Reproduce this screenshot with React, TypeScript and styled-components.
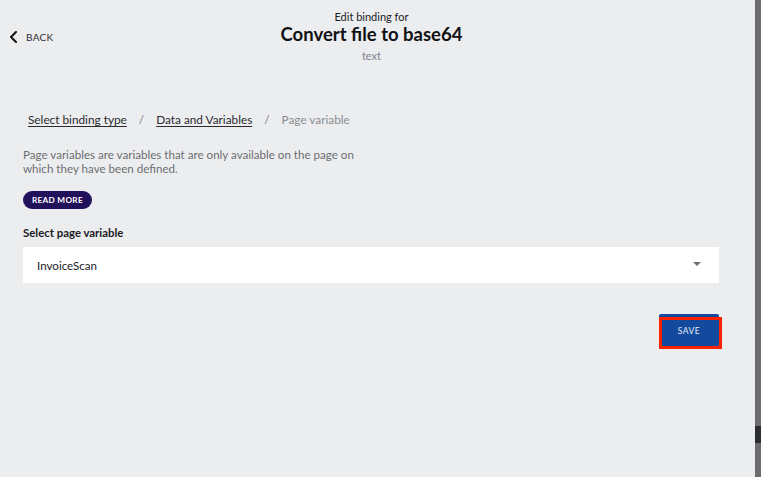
import React from "react";
import styled, { createGlobalStyle } from "styled-components";

const GlobalStyle = createGlobalStyle`
  html, body { margin: 0; padding: 0; background: #ecedef; }
  body { font-family: Lato, "Open Sans", sans-serif; color: #1b1b1f; }
  * { box-sizing: border-box; }
`;

const Page = styled.div`
  display: flex;
  width: 761px;
  height: 477px;
  overflow: hidden;
`;

const Panel = styled.div`
  flex: 1;
  position: relative;
  background: #ecedef;
  display: flex;
  flex-direction: column;
`;

const Scrollbar = styled.div`
  width: 6px;
  background: #6d6d6f;
  display: flex;
  flex-direction: column;
  padding-top: 426px;
`;

const Thumb = styled.div`
  height: 17px;
  background: #2b2d31;
`;

const Header = styled.header`
  display: grid;
  grid-template-columns: 1fr auto 1fr;
  align-items: start;
  height: 74px;
  padding: 10px 21px 0 9px;
`;

const BackButton = styled.button`
  display: flex;
  align-items: center;
  gap: 8px;
  background: none;
  border: none;
  padding: 0;
  margin-top: 21px;
  justify-self: start;
  font-family: inherit;
  font-size: 10px;
  letter-spacing: 0.3px;
  color: #2c2c33;
  text-transform: uppercase;
  cursor: pointer;
`;

const TitleBlock = styled.div`
  display: flex;
  flex-direction: column;
  align-items: center;
`;

const Kicker = styled.div`
  font-size: 11px;
  line-height: 13px;
  color: #1b1b1f;
`;

const Title = styled.h1`
  margin: -1px 0 0;
  font-size: 18.5px;
  font-weight: 700;
  line-height: 24px;
  color: #111114;
`;

const Subtitle = styled.div`
  margin-top: 3px;
  font-size: 11px;
  line-height: 13px;
  color: #7c8291;
`;

const Content = styled.main`
  padding: 39px 36px 0 23px;
  display: flex;
  flex-direction: column;
`;

const Breadcrumbs = styled.nav`
  display: flex;
  align-items: center;
  gap: 12px;
  padding-left: 5px;
  font-size: 11.8px;
  line-height: 14px;
`;

const Crumb = styled.a<{ $current?: boolean }>`
  color: ${(p) => (p.$current ? "#8a8c93" : "#2a2a30")};
  text-decoration: ${(p) => (p.$current ? "none" : "underline")};
  text-underline-offset: 2px;
`;

const Sep = styled.span`
  color: #7a7c83;
`;

const Description = styled.p`
  margin: 21px 0 0;
  font-size: 11.6px;
  line-height: 14px;
  color: #6c6d72;
  max-width: 350px;
`;

const PillButton = styled.button`
  align-self: flex-start;
  margin-top: 15px;
  height: 18px;
  padding: 0 9px;
  border: none;
  border-radius: 9px;
  background: #21105a;
  color: #ffffff;
  font-family: inherit;
  font-size: 8.2px;
  font-weight: 700;
  letter-spacing: 0.3px;
  text-transform: uppercase;
`;

const FieldLabel = styled.label`
  margin-top: 17px;
  font-size: 11.4px;
  font-weight: 700;
  line-height: 14px;
  color: #1b1b1f;
`;

const Select = styled.div`
  margin-top: 7px;
  height: 36px;
  background: #ffffff;
  display: flex;
  align-items: center;
  justify-content: space-between;
  padding: 0 18px 0 14px;
  font-size: 11.6px;
  color: #1b1b1f;
`;

const Caret = styled.span`
  width: 0;
  height: 0;
  border-left: 4px solid transparent;
  border-right: 4px solid transparent;
  border-top: 4px solid #6f7076;
  margin-top: -2px;
`;

const Actions = styled.div`
  display: flex;
  justify-content: flex-end;
  margin-top: 31px;
`;

const SaveWrap = styled.div`
  position: relative;
`;

const SaveButton = styled.button`
  width: 60px;
  height: 33px;
  border: none;
  border-radius: 2px;
  background: #134a9e;
  color: #e8eef9;
  font-family: inherit;
  font-size: 8.5px;
  font-weight: 400;
  letter-spacing: 0.5px;
  text-transform: uppercase;
`;

const Highlight = styled.div`
  position: absolute;
  left: 0;
  top: 3px;
  width: 63px;
  height: 32px;
  border: 3px solid #ff2200;
  pointer-events: none;
`;

export default function App() {
  return (
    <>
      <GlobalStyle />
      <Page>
        <Panel>
          <Header>
            <BackButton>
              <svg width="9" height="12" viewBox="0 0 9 12" fill="none">
                <path d="M7 1 L2 6 L7 11" stroke="#111" strokeWidth="2" strokeLinecap="round" strokeLinejoin="round" />
              </svg>
              Back
            </BackButton>
            <TitleBlock>
              <Kicker>Edit binding for</Kicker>
              <Title>Convert file to base64</Title>
              <Subtitle>text</Subtitle>
            </TitleBlock>
            <div />
          </Header>
          <Content>
            <Breadcrumbs>
              <Crumb>Select binding type</Crumb>
              <Sep>/</Sep>
              <Crumb>Data and Variables</Crumb>
              <Sep>/</Sep>
              <Crumb $current>Page variable</Crumb>
            </Breadcrumbs>
            <Description>
              Page variables are variables that are only available on the page on which they have been defined.
            </Description>
            <PillButton>Read more</PillButton>
            <FieldLabel>Select page variable</FieldLabel>
            <Select>
              InvoiceScan
              <Caret />
            </Select>
            <Actions>
              <SaveWrap>
                <SaveButton>Save</SaveButton>
                <Highlight />
              </SaveWrap>
            </Actions>
          </Content>
        </Panel>
        <Scrollbar>
          <Thumb />
        </Scrollbar>
      </Page>
    </>
  );
}
